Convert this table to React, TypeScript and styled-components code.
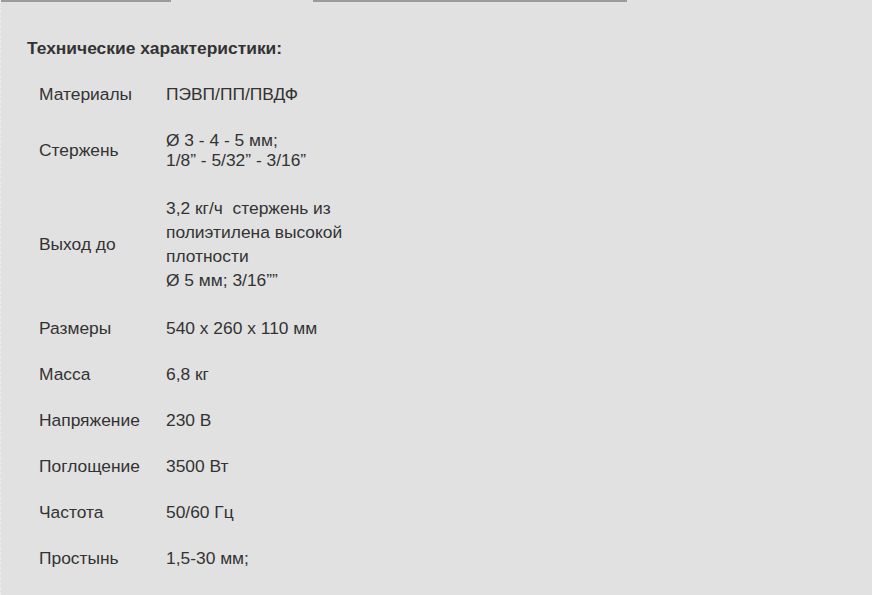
import React from "react";
import styled, { createGlobalStyle } from "styled-components";

interface Spec {
  label: string;
  lines: string[];
  lineHeight?: number;
}

const specs: Spec[] = [
  { label: "Материалы", lines: ["ПЭВП/ПП/ПВДФ"] },
  { label: "Стержень", lines: ["Ø 3 - 4 - 5 мм;", "1/8” - 5/32” - 3/16”"] },
  {
    label: "Выход до",
    lines: ["3,2 кг/ч\u00a0 стержень из полиэтилена высокой плотности", "Ø 5 мм; 3/16””"],
    lineHeight: 24,
  },
  { label: "Размеры", lines: ["540 x 260 x 110 мм"] },
  { label: "Масса", lines: ["6,8 кг"] },
  { label: "Напряжение", lines: ["230 В"] },
  { label: "Поглощение", lines: ["3500 Вт"] },
  { label: "Частота", lines: ["50/60 Гц"] },
  { label: "Простынь", lines: ["1,5-30 мм;"] },
];

const GlobalStyle = createGlobalStyle`
  html, body {
    margin: 0;
    padding: 0;
    background: #ffffff;
  }
  body {
    font-family: "Liberation Sans", Arial, sans-serif;
  }
`;

const Panel = styled.div`
  width: 872px;
  height: 595px;
  background: #e1e1e1;
  border-left: 1px dashed #ececec;
  box-sizing: border-box;
  overflow: hidden;
`;

const TabStrip = styled.div`
  display: flex;
  height: 2px;
`;

const TabEdge = styled.div<{ $width: number; $active?: boolean }>`
  width: ${({ $width }) => $width}px;
  background: ${({ $active }) => ($active ? "transparent" : "#9b9b9b")};
`;

const Content = styled.div`
  padding: 36px 0 0 26px;
`;

const Heading = styled.h3`
  margin: 0;
  font-size: 17.4px;
  line-height: 20px;
  font-weight: 700;
  color: #333;
`;

const Table = styled.div`
  display: grid;
  grid-template-columns: 139px 218px;
  margin-top: 13px;
  color: #333;
  font-size: 17.4px;
`;

const Label = styled.div`
  display: flex;
  align-items: center;
  padding: 13px 0 13px 12px;
  line-height: 20px;
`;

const Value = styled.div<{ $lineHeight: number }>`
  display: flex;
  flex-direction: column;
  justify-content: center;
  padding: 13px 0;
  line-height: ${({ $lineHeight }) => $lineHeight}px;
`;

const App = () => {
  return (
    <>
      <GlobalStyle />
      <Panel>
        <TabStrip>
          <TabEdge $width={170} />
          <TabEdge $width={142} $active />
          <TabEdge $width={314} />
        </TabStrip>
        <Content>
          <Heading>Технические характеристики:</Heading>
          <Table>
            {specs.map((s) => (
              <React.Fragment key={s.label}>
                <Label>{s.label}</Label>
                <Value $lineHeight={s.lineHeight ?? 20}>
                  {s.lines.map((l) => (
                    <span key={l}>{l}</span>
                  ))}
                </Value>
              </React.Fragment>
            ))}
          </Table>
        </Content>
      </Panel>
    </>
  );
};

export default App;
